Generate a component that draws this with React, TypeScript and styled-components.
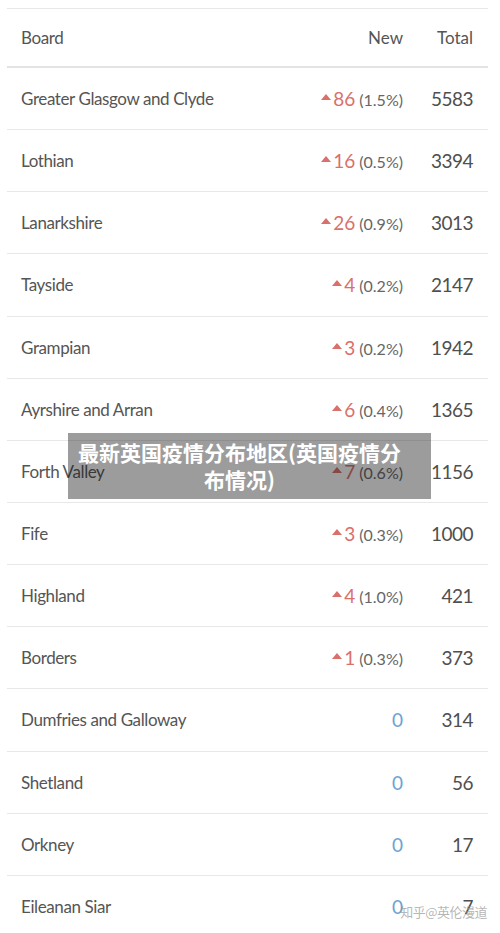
import styled, { createGlobalStyle } from "styled-components"

interface BoardRow {
  name: string
  added: number
  pct?: string
  total: number
}

const rows: BoardRow[] = [
  { name: "Greater Glasgow and Clyde", added: 86, pct: "1.5%", total: 5583 },
  { name: "Lothian", added: 16, pct: "0.5%", total: 3394 },
  { name: "Lanarkshire", added: 26, pct: "0.9%", total: 3013 },
  { name: "Tayside", added: 4, pct: "0.2%", total: 2147 },
  { name: "Grampian", added: 3, pct: "0.2%", total: 1942 },
  { name: "Ayrshire and Arran", added: 6, pct: "0.4%", total: 1365 },
  { name: "Forth Valley", added: 7, pct: "0.6%", total: 1156 },
  { name: "Fife", added: 3, pct: "0.3%", total: 1000 },
  { name: "Highland", added: 4, pct: "1.0%", total: 421 },
  { name: "Borders", added: 1, pct: "0.3%", total: 373 },
  { name: "Dumfries and Galloway", added: 0, total: 314 },
  { name: "Shetland", added: 0, total: 56 },
  { name: "Orkney", added: 0, total: 17 },
  { name: "Eileanan Siar", added: 0, total: 7 },
]

export default function App() {
  return (
    <Page>
      <GlobalStyle />
      <Table>
        <HeadRow>
          <Cell>Board</Cell>
          <NumCell>New</NumCell>
          <NumCell>Total</NumCell>
        </HeadRow>
        {rows.map((r, i) => (
          <Row key={i}>
            <Cell>{r.name}</Cell>
            <NumCell>
              {r.added > 0 ? (
                <NewValue>
                  <Arrow />
                  <Up>{r.added}</Up>
                  <Pct>({r.pct})</Pct>
                </NewValue>
              ) : (
                <Zero>0</Zero>
              )}
            </NumCell>
            <NumCell><Total>{r.total}</Total></NumCell>
          </Row>
        ))}
      </Table>
      <Caption>最新英国疫情分布地区(英国疫情分布情况)</Caption>
      <Watermark>知乎@英伦漫道</Watermark>
    </Page>
  )
}

const GlobalStyle = createGlobalStyle`
  body {
    margin: 0;
    background: #fff;
  }
`

const Page = styled.div`
  position: relative;
  width: 500px;
  height: 933px;
  overflow: hidden;
  padding-top: 8px;
  box-sizing: border-box;
  font-family: Lato, "Liberation Sans", sans-serif;
  color: #555;
`

const Table = styled.div`
  margin-left: 7px;
  width: 481px;
  border-top: 1px solid #e8e8e8;
`

const HeadRow = styled.div`
  display: grid;
  grid-template-columns: 1fr auto 70px;
  align-items: center;
  height: 57px;
  padding: 0 15px 0 14px;
  border-bottom: 2px solid #e3e3e3;
  font-size: 17px;
`

const Row = styled(HeadRow)`
  height: 61.15px;
  border-bottom: 1px solid #e8e8e8;
`

const Cell = styled.div`
  font-size: 17px;
  letter-spacing: -0.4px;
  color: #555;
`

const NumCell = styled.div`
  text-align: right;
  font-size: 17px;
  color: #555;
`

const NewValue = styled.span`
  display: inline-flex;
  align-items: baseline;
`

const Arrow = styled.span`
  width: 0;
  height: 0;
  border-left: 5px solid transparent;
  border-right: 5px solid transparent;
  border-bottom: 6px solid #d9706b;
  margin-right: 2px;
  position: relative;
  top: -6px;
`

const Up = styled.span`
  color: #d9706b;
  font-size: 19px;
  margin-right: 4px;
`

const Pct = styled.span`
  color: #666;
  font-size: 16px;
`

const Zero = styled.span`
  color: #6ea3d3;
  font-size: 19px;
`

const Total = styled.span`
  font-size: 19px;
  letter-spacing: -0.5px;
  color: #4f4f4f;
`

const Caption = styled.div`
  position: absolute;
  left: 68px;
  top: 433px;
  width: 363px;
  box-sizing: border-box;
  padding: 6px 30px 6px 10px;
  background: rgba(20, 20, 20, 0.42);
  color: #fff;
  font-family: "Noto Sans CJK SC", sans-serif;
  font-weight: 700;
  font-size: 21px;
  line-height: 27px;
  text-align: center;
`

const Watermark = styled.div`
  position: absolute;
  right: 13px;
  top: 902px;
  font-family: "Noto Sans CJK SC", sans-serif;
  font-size: 13px;
  color: rgba(150, 150, 150, 0.7);
  letter-spacing: -0.5px;
`
